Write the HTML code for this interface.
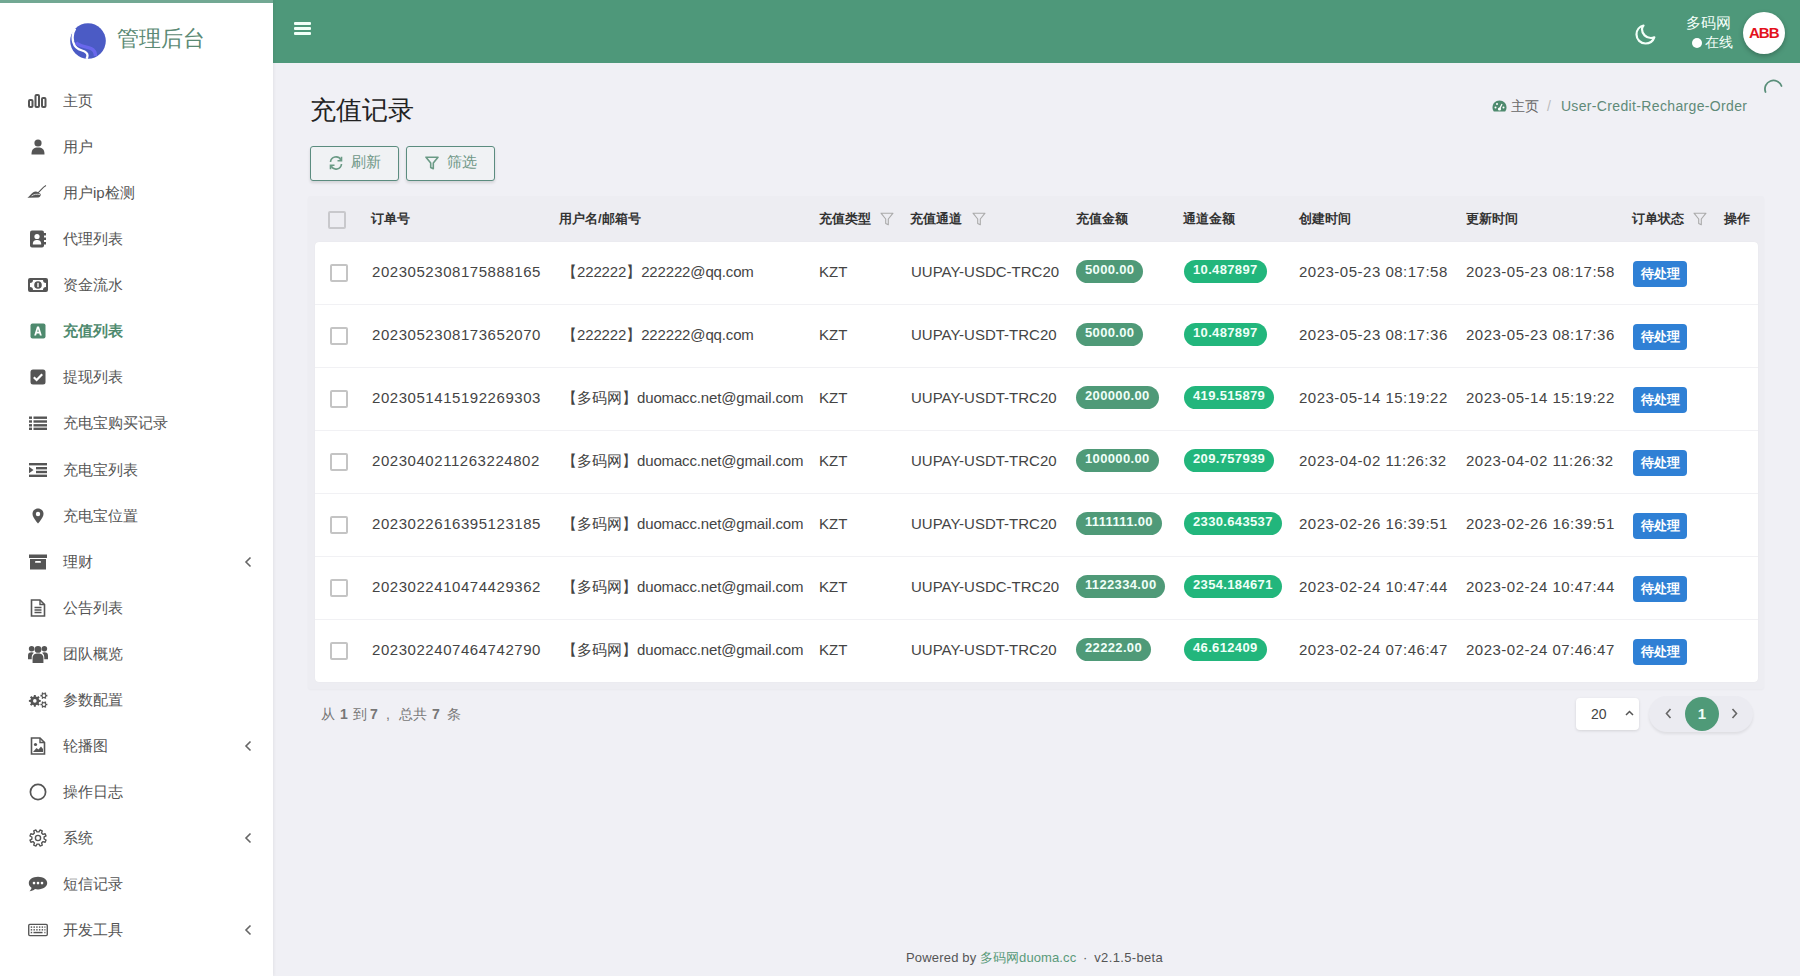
<!DOCTYPE html>
<html><head><meta charset="utf-8"><title>recharge</title>
<style>
*{box-sizing:border-box;margin:0;padding:0}
html,body{width:1800px;height:976px;overflow:hidden}
body{background:#f0f0f5;font-family:"Liberation Sans",sans-serif;color:#555;position:relative}
.abs{position:absolute}
i.c{font-style:normal;font-size:1.2em;line-height:0;letter-spacing:0.0833em;position:relative;top:0.1em;-webkit-text-stroke:0.6px currentColor}
.user i.c{letter-spacing:0.03em}
html.cjk i.c{font-size:1em;letter-spacing:0;top:0;-webkit-text-stroke:0;line-height:inherit}
html.cjk .mi.active .lbl i.c,html.cjk .th i.c,html.cjk .st i.c{-webkit-text-stroke:0}
.td.user{letter-spacing:-0.15px}
#side{position:absolute;left:0;top:0;width:273px;height:976px;background:#fff;box-shadow:1px 0 3px rgba(0,0,0,.06);z-index:2}
#side .strip{position:absolute;left:0;top:0;width:273px;height:3px;background:#72a893}
#logo{position:absolute;left:70px;top:23px;width:36px;height:36px}
#brand{position:absolute;left:117px;top:25px;font-size:22px;color:#5b8a74;line-height:28px;white-space:nowrap}
.mi{position:absolute;left:0;width:273px;height:46px}
.mi .ico{position:absolute;left:28px;top:0;width:20px;height:46px;display:flex;align-items:center;justify-content:center}
.mi .lbl{position:absolute;left:63px;top:14px;font-size:15px;line-height:18px;color:#555;white-space:nowrap}
.mi.active .lbl{color:#4e8a6e;font-weight:bold}
.mi .chev{position:absolute;left:244px;top:17px}
#hdr{position:absolute;left:273px;top:0;width:1527px;height:63px;background:#4e987a}
#ham{position:absolute;left:21px;top:22px;width:17px;height:13px}
#ham i{display:block;height:3px;background:#f2fff8;margin-bottom:2px;border-radius:1px}
#moon{position:absolute;left:1362px;top:24px}
#uname{position:absolute;left:1413px;top:14px;font-size:15px;line-height:18px;color:#f4fff9;white-space:nowrap}
#online{position:absolute;left:1419px;top:35px;font-size:13.5px;line-height:16px;color:#f4fff9;white-space:nowrap}
#online .dot{display:inline-block;width:10px;height:10px;border-radius:50%;background:#fff;vertical-align:-1px;margin-right:3px}
#avatar{position:absolute;left:1470px;top:12px;width:42px;height:42px;border-radius:50%;background:#fff;box-shadow:0 2px 5px rgba(0,0,0,.25)}
#avatar span{position:absolute;left:6px;top:13px;font-size:15px;line-height:16px;font-weight:bold;color:#e3121c;letter-spacing:-1px}
#title{position:absolute;left:310px;top:94px;font-size:26px;line-height:32px;color:#222;white-space:nowrap}
#crumb{position:absolute;left:1492px;top:97px;font-size:14px;line-height:18px;color:#5f8a78;white-space:nowrap}
#crumb .hm{color:#666}
#crumb .sep{color:#bbb;margin:0 10px 0 8px}
#crumb .tail{letter-spacing:0.35px}
#spin{position:absolute;left:1763px;top:78px}
.btn{position:absolute;top:146px;height:35px;border:1.5px solid #5b8c7f;border-radius:3px;background:#f0f2f4;box-shadow:0 2px 3px rgba(0,0,0,.12)}
.btn span{position:absolute;top:6px;font-size:14.5px;line-height:18px;color:#6f9787;white-space:nowrap}
#card{position:absolute;left:308px;top:196px;width:1456px;height:493px;background:#ededf2;border-radius:2px;box-shadow:0 1px 2px rgba(0,0,0,.03)}
.th{position:absolute;top:14px;font-size:13px;font-weight:bold;color:#333;line-height:18px;white-space:nowrap}
.filt{position:absolute;top:16px}
.cb{position:absolute;width:18px;height:18px;border:2px solid #c4c4c4;border-radius:2px;background:#fff}
#tbody{position:absolute;left:315px;top:242px;width:1443px;height:440px;background:#fff;border-radius:4px;box-shadow:0 0 1px rgba(0,0,0,.08)}
.tr{position:absolute;left:0;width:1443px;height:63px;border-bottom:1px solid #f1f1f4}
.tr.last{border-bottom:none}
.td{position:absolute;top:21px;font-size:15px;line-height:18px;color:#444;white-space:nowrap}
.td.num{letter-spacing:0.55px}
.td.dt{letter-spacing:0.5px}
.badge{position:absolute;top:18px;height:23px;border-radius:12px;padding:0 9px;font-size:13px;font-weight:bold;line-height:20px;color:#f0fff8;letter-spacing:0.35px;white-space:nowrap}
.b1{background:#4f9a78}
.b2{background:#22b67c}
.st{position:absolute;top:19px;width:54px;height:26px;border-radius:4px;background:#2f80d5;color:#fff;font-size:13px;font-weight:bold;line-height:26px;text-align:center;white-space:nowrap}
#info{position:absolute;left:320px;top:705px;font-size:14px;line-height:18px;color:#777;white-space:nowrap}
#info span,#info b{position:absolute;top:0}
#info b{color:#777}
#per{position:absolute;left:1576px;top:698px;width:63px;height:32px;background:#fff;border-radius:4px;box-shadow:0 1px 3px rgba(0,0,0,.12)}
#per span{position:absolute;left:15px;top:7px;font-size:14px;line-height:18px;color:#444}
#per svg{position:absolute;left:49px;top:12px}
#pager{position:absolute;left:1649px;top:696px;width:104px;height:36px;background:#ebebf1;border-radius:18px;box-shadow:0 2px 3px rgba(0,0,0,.08)}
#pager .cur{position:absolute;left:36px;top:1px;width:34px;height:34px;border-radius:50%;background:#4f9a78;color:#f0fff8;font-size:15px;font-weight:bold;line-height:34px;text-align:center}
#pager svg{position:absolute;top:12px}
#foot{position:absolute;left:906px;top:950px;font-size:13px;line-height:16px;color:#555;white-space:nowrap}
#foot .g{color:#5a9a7a}
#foot .pw{letter-spacing:0.18px}
#foot .g{letter-spacing:0.1px}
#foot .dotsep{display:inline-block;width:18px;text-align:center}
#foot .ver{letter-spacing:0.35px}
</style></head>
<body>
<div id="side">
  <div class="strip"></div>
  <svg id="logo" viewBox="0 0 36 36"><circle cx="18" cy="18" r="17.8" fill="#4b5bc5"/><path d="M6 19.5 C9 23.5 15 23 21 25.5 C24 27 25.5 29.5 25.5 33" stroke="#6e6af2" stroke-width="3.5" fill="none" opacity=".85"/><path d="M5.2 5.5 C2.5 9.5 2.3 15 3.2 19 C4.5 24 8 26.5 12 27.5 C15.5 28.5 17.5 30 17.5 32.5 C17.5 34 17 35 16.5 35.8" stroke="#fff" stroke-width="2.3" fill="none"/></svg>
  <div id="brand"><i class="c">管理后台</i></div>
<div class="mi" style="top:78px"><span class="ico"><svg width="20" height="14" viewBox="0 0 20 14"><g fill="none" stroke="#555" stroke-width="2"><rect x="1" y="6" width="3.5" height="7" rx="1"/><rect x="7.5" y="1" width="3.5" height="12" rx="1"/><rect x="14" y="4" width="3.5" height="9" rx="1"/></g></svg></span><span class="lbl"><i class="c">主页</i></span></div>
<div class="mi" style="top:124px"><span class="ico"><svg width="16" height="16" viewBox="0 0 16 16"><circle cx="8" cy="4" r="3.6" fill="#555"/><path d="M1.5 15.5 C1.5 10 4 8.5 8 8.5 C12 8.5 14.5 10 14.5 15.5 Z" fill="#555"/></svg></span><span class="lbl"><i class="c">用户</i></span></div>
<div class="mi" style="top:170px"><span class="ico"><svg width="26" height="17" viewBox="0 0 24 16" style="position:relative;top:-2px;left:-1px"><path d="M0.5 15.5 C3 13.8 5 10.5 7.5 8.8 C9.5 7.5 12 7.8 13.8 9.2 L16.8 11.2 C16 13.8 15 15 13.5 15.2 Z" fill="#555"/><path d="M13.2 9.6 C16.5 7 18.5 3 22.8 0.8" stroke="#555" stroke-width="1.3" fill="none"/><path d="M5.5 13.3 C8.5 11.2 11.5 11 16 11.6" stroke="#fff" stroke-width="0.9" fill="none"/></svg></span><span class="lbl"><i class="c">用户</i>ip<i class="c">检测</i></span></div>
<div class="mi" style="top:216px"><span class="ico"><svg width="18" height="18" viewBox="0 0 18 18"><rect x="1" y="0.5" width="14" height="17" rx="2" fill="#555"/><rect x="15" y="3" width="2" height="2.5" fill="#555"/><rect x="15" y="7.5" width="2" height="2.5" fill="#555"/><rect x="15" y="12" width="2" height="2.5" fill="#555"/><circle cx="8" cy="6.5" r="2.6" fill="#fff"/><path d="M3.8 14.5 C3.8 11 5.5 10 8 10 C10.5 10 12.2 11 12.2 14.5 Z" fill="#fff"/></svg></span><span class="lbl"><i class="c">代理列表</i></span></div>
<div class="mi" style="top:262px"><span class="ico"><svg width="20" height="14" viewBox="0 0 20 14"><rect x="1" y="1" width="18" height="12" rx="1" fill="none" stroke="#555" stroke-width="2"/><circle cx="10" cy="7" r="3.8" fill="#555"/><path d="M2 2h3a3 3 0 0 1-3 3z M18 2h-3a3 3 0 0 0 3 3z M2 12h3a3 3 0 0 0-3-3z M18 12h-3a3 3 0 0 1 3-3z" fill="#555"/><rect x="9.3" y="4.8" width="1.4" height="4.4" fill="#fff"/></svg></span><span class="lbl"><i class="c">资金流水</i></span></div>
<div class="mi active" style="top:308px"><span class="ico"><svg width="16" height="16" viewBox="0 0 16 16"><rect x="0.5" y="0.5" width="15" height="15" rx="2" fill="#4e8a6e"/><path d="M4.2 12.5 L7 3.5 H9 L11.8 12.5 H9.9 L9.3 10.5 H6.7 L6.1 12.5 Z M7.2 8.8 H8.8 L8 6 Z" fill="#fff"/></svg></span><span class="lbl"><i class="c">充值列表</i></span></div>
<div class="mi" style="top:354px"><span class="ico"><svg width="16" height="16" viewBox="0 0 16 16"><rect x="0.5" y="0.5" width="15" height="15" rx="2.5" fill="#555"/><path d="M3.8 8.2 L6.6 11 L12.2 5.2" stroke="#fff" stroke-width="2.2" fill="none"/></svg></span><span class="lbl"><i class="c">提现列表</i></span></div>
<div class="mi" style="top:400px"><span class="ico"><svg width="18" height="14" viewBox="0 0 18 14"><g fill="#555"><rect x="0" y="0.5" width="3" height="2.4"/><rect x="4.5" y="0.5" width="13.5" height="2.4"/><rect x="0" y="4.3" width="3" height="2.4"/><rect x="4.5" y="4.3" width="13.5" height="2.4"/><rect x="0" y="8.1" width="3" height="2.4"/><rect x="4.5" y="8.1" width="13.5" height="2.4"/><rect x="0" y="11.6" width="3" height="2.4"/><rect x="4.5" y="11.6" width="13.5" height="2.4"/></g></svg></span><span class="lbl"><i class="c">充电宝购买记录</i></span></div>
<div class="mi" style="top:447px"><span class="ico"><svg width="18" height="14" viewBox="0 0 18 14"><g fill="#555"><rect x="0" y="0" width="18" height="2.4"/><rect x="7" y="4" width="11" height="2.4"/><rect x="7" y="7.8" width="11" height="2.4"/><rect x="0" y="11.6" width="18" height="2.4"/><path d="M0 3.8 L4.5 7 L0 10.2 Z"/></g></svg></span><span class="lbl"><i class="c">充电宝列表</i></span></div>
<div class="mi" style="top:493px"><span class="ico"><svg width="12" height="16" viewBox="0 0 12 16"><path d="M6 0.5 C9.2 0.5 11.5 2.8 11.5 6 C11.5 9.5 6 15.5 6 15.5 C6 15.5 0.5 9.5 0.5 6 C0.5 2.8 2.8 0.5 6 0.5 Z" fill="#555"/><circle cx="6" cy="6" r="2.2" fill="#fff"/></svg></span><span class="lbl"><i class="c">充电宝位置</i></span></div>
<div class="mi" style="top:539px"><span class="ico"><svg width="18" height="16" viewBox="0 0 18 16"><rect x="0" y="0.5" width="18" height="3.5" fill="#555"/><rect x="1" y="5" width="16" height="10.5" fill="#555"/><rect x="6" y="7" width="6" height="1.8" rx="0.9" fill="#fff"/></svg></span><span class="lbl"><i class="c">理财</i></span><svg class="chev" width="8" height="12" viewBox="0 0 8 12"><path d="M6.5 1.5 L2 6 L6.5 10.5" fill="none" stroke="#666" stroke-width="1.6"/></svg></div>
<div class="mi" style="top:585px"><span class="ico"><svg width="16" height="18" viewBox="0 0 16 18"><path d="M1.5 1 H10 L14.5 5.5 V17 H1.5 Z" fill="none" stroke="#555" stroke-width="1.6"/><path d="M10 1 V5.5 H14.5" fill="none" stroke="#555" stroke-width="1.4"/><g stroke="#555" stroke-width="1.3"><path d="M4.5 8.5 H11.5 M4.5 11 H11.5 M4.5 13.5 H11.5"/></g></svg></span><span class="lbl"><i class="c">公告列表</i></span></div>
<div class="mi" style="top:631px"><span class="ico"><svg width="21" height="20" viewBox="0 0 21 20"><g fill="#555"><circle cx="10.5" cy="5.2" r="3.6"/><circle cx="3.8" cy="4.6" r="2.9"/><circle cx="17.2" cy="4.6" r="2.9"/><path d="M4.8 19.5 V14.5 C4.8 11 7 9.6 10.5 9.6 C14 9.6 16.2 11 16.2 14.5 V19.5 Z"/><path d="M0 15.5 V11.8 C0 9.2 1.3 8.2 3.8 8.2 C4.8 8.2 5.6 8.4 6.2 8.8 C4.6 10 3.9 11.6 3.9 13.6 V15.5 Z"/><path d="M21 15.5 V11.8 C21 9.2 19.7 8.2 17.2 8.2 C16.2 8.2 15.4 8.4 14.8 8.8 C16.4 10 17.1 11.6 17.1 13.6 V15.5 Z"/></g></svg></span><span class="lbl"><i class="c">团队概览</i></span></div>
<div class="mi" style="top:677px"><span class="ico"><svg width="22" height="18" viewBox="0 0 22 18"><path d="M12.26 8.84 L14.02 8.96 L14.02 11.04 L12.26 11.16 L11.69 12.54 L12.84 13.88 L11.38 15.34 L10.04 14.19 L8.66 14.76 L8.54 16.52 L6.46 16.52 L6.34 14.76 L4.96 14.19 L3.62 15.34 L2.16 13.88 L3.31 12.54 L2.74 11.16 L0.98 11.04 L0.98 8.96 L2.74 8.84 L3.31 7.46 L2.16 6.12 L3.62 4.66 L4.96 5.81 L6.34 5.24 L6.46 3.48 L8.54 3.48 L8.66 5.24 L10.04 5.81 L11.38 4.66 L12.84 6.12 L11.69 7.46 Z" fill="#555"/><circle cx="7.5" cy="10" r="2" fill="#fff"/><path d="M20.04 3.29 L21.29 3.29 L21.29 5.11 L20.04 5.11 L19.56 5.94 L20.19 7.03 L18.60 7.94 L17.98 6.86 L17.02 6.86 L16.40 7.94 L14.81 7.03 L15.44 5.94 L14.96 5.11 L13.71 5.11 L13.71 3.29 L14.96 3.29 L15.44 2.46 L14.81 1.37 L16.40 0.46 L17.02 1.54 L17.98 1.54 L18.60 0.46 L20.19 1.37 L19.56 2.46 Z" fill="#555"/><circle cx="17.5" cy="4.2" r="1.5" fill="#fff"/><path d="M20.04 13.09 L21.29 13.09 L21.29 14.91 L20.04 14.91 L19.56 15.74 L20.19 16.83 L18.60 17.74 L17.98 16.66 L17.02 16.66 L16.40 17.74 L14.81 16.83 L15.44 15.74 L14.96 14.91 L13.71 14.91 L13.71 13.09 L14.96 13.09 L15.44 12.26 L14.81 11.17 L16.40 10.26 L17.02 11.34 L17.98 11.34 L18.60 10.26 L20.19 11.17 L19.56 12.26 Z" fill="#555"/><circle cx="17.5" cy="14" r="1.5" fill="#fff"/></svg></span><span class="lbl"><i class="c">参数配置</i></span></div>
<div class="mi" style="top:723px"><span class="ico"><svg width="16" height="18" viewBox="0 0 16 18"><path d="M1.5 1 H10 L14.5 5.5 V17 H1.5 Z" fill="none" stroke="#555" stroke-width="1.6"/><path d="M10 1 V5.5 H14.5" fill="none" stroke="#555" stroke-width="1.4"/><circle cx="5.5" cy="7.5" r="1.6" fill="#555"/><path d="M3 15 L6.5 11 L8.5 12.5 L11 9.5 L13 12 V15 Z" fill="#555"/></svg></span><span class="lbl"><i class="c">轮播图</i></span><svg class="chev" width="8" height="12" viewBox="0 0 8 12"><path d="M6.5 1.5 L2 6 L6.5 10.5" fill="none" stroke="#666" stroke-width="1.6"/></svg></div>
<div class="mi" style="top:769px"><span class="ico"><svg width="18" height="18" viewBox="0 0 18 18"><circle cx="9" cy="9" r="7.6" fill="none" stroke="#555" stroke-width="1.7"/></svg></span><span class="lbl"><i class="c">操作日志</i></span></div>
<div class="mi" style="top:815px"><span class="ico"><svg width="18" height="18" viewBox="0 0 18 18"><path d="M15.12 10.00 L17.05 11.00 L16.14 13.24 L14.05 12.59 L12.62 14.03 L13.28 16.11 L11.05 17.04 L10.03 15.11 L8.00 15.12 L7.00 17.05 L4.76 16.14 L5.41 14.05 L3.97 12.62 L1.89 13.28 L0.96 11.05 L2.89 10.03 L2.88 8.00 L0.95 7.00 L1.86 4.76 L3.95 5.41 L5.38 3.97 L4.72 1.89 L6.95 0.96 L7.97 2.89 L10.00 2.88 L11.00 0.95 L13.24 1.86 L12.59 3.95 L14.03 5.38 L16.11 4.72 L17.04 6.95 L15.11 7.97 Z" fill="none" stroke="#555" stroke-width="1.4" stroke-linejoin="round"/><circle cx="9" cy="9" r="2.6" fill="none" stroke="#555" stroke-width="1.4"/></svg></span><span class="lbl"><i class="c">系统</i></span><svg class="chev" width="8" height="12" viewBox="0 0 8 12"><path d="M6.5 1.5 L2 6 L6.5 10.5" fill="none" stroke="#666" stroke-width="1.6"/></svg></div>
<div class="mi" style="top:861px"><span class="ico"><svg width="20" height="16" viewBox="0 0 20 16"><path d="M10 0.8 C15.3 0.8 19.2 3.6 19.2 7.1 C19.2 10.6 15.3 13.4 10 13.4 C8.9 13.4 7.9 13.3 7 13.1 C5.6 14.5 3.5 15.2 1.5 15.3 C2.6 14.3 3.4 13.1 3.5 11.8 C1.8 10.7 0.8 9 0.8 7.1 C0.8 3.6 4.7 0.8 10 0.8 Z" fill="#555"/><circle cx="6" cy="7.1" r="1.3" fill="#fff"/><circle cx="10" cy="7.1" r="1.3" fill="#fff"/><circle cx="14" cy="7.1" r="1.3" fill="#fff"/></svg></span><span class="lbl"><i class="c">短信记录</i></span></div>
<div class="mi" style="top:907px"><span class="ico"><svg width="22" height="14" viewBox="0 0 22 14"><rect x="0.8" y="0.8" width="20.4" height="12.4" rx="1.2" fill="none" stroke="#555" stroke-width="1.5"/><g fill="#555"><rect x="3" y="3" width="1.6" height="1.6"/><rect x="6" y="3" width="1.6" height="1.6"/><rect x="9" y="3" width="1.6" height="1.6"/><rect x="12" y="3" width="1.6" height="1.6"/><rect x="15" y="3" width="1.6" height="1.6"/><rect x="18" y="3" width="1.2" height="1.6"/><rect x="3" y="6" width="1.6" height="1.6"/><rect x="6" y="6" width="1.6" height="1.6"/><rect x="9" y="6" width="1.6" height="1.6"/><rect x="12" y="6" width="1.6" height="1.6"/><rect x="15" y="6" width="1.6" height="1.6"/><rect x="18" y="6" width="1.2" height="1.6"/><rect x="3" y="9" width="1.6" height="1.6"/><rect x="6" y="9" width="10" height="1.6"/><rect x="18" y="9" width="1.2" height="1.6"/></g></svg></span><span class="lbl"><i class="c">开发工具</i></span><svg class="chev" width="8" height="12" viewBox="0 0 8 12"><path d="M6.5 1.5 L2 6 L6.5 10.5" fill="none" stroke="#666" stroke-width="1.6"/></svg></div>
</div>

<div id="hdr">
  <div id="ham"><i></i><i></i><i></i></div>
  <svg id="moon" width="21" height="21" viewBox="0 0 21 21"><path d="M8.5 1.5 C4.5 2.5 1.5 6 1.5 10.5 C1.5 15.5 5.5 19.5 10.5 19.5 C14.5 19.5 18 17 19.3 13.3 C18.2 13.8 17 14 15.8 14 C11 14 7 10 7 5.2 C7 3.9 7.5 2.6 8.5 1.5 Z" fill="none" stroke="#f4fff9" stroke-width="2.2" stroke-linejoin="round"/></svg>
  <div id="uname"><i class="c">多码网</i></div>
  <div id="online"><b class="dot"></b><i class="c">在线</i></div>
  <div id="avatar"><span>ABB</span></div>
</div>

<div id="title"><i class="c">充值记录</i></div>
<div id="crumb"><svg width="15" height="12" viewBox="0 0 15 12" style="vertical-align:-1px;margin-right:4px"><path d="M7.5 0.5 C11.6 0.5 14.5 3.6 14.5 7.5 C14.5 9 14 10.4 13.2 11.5 H1.8 C1 10.4 0.5 9 0.5 7.5 C0.5 3.6 3.4 0.5 7.5 0.5 Z" fill="#4e8a6e"/><circle cx="7.5" cy="9" r="1.6" fill="#fff"/><path d="M7.5 9 L10 4" stroke="#fff" stroke-width="1.3"/><circle cx="3.5" cy="7.5" r="1" fill="#fff"/><circle cx="5" cy="4" r="1" fill="#fff"/><circle cx="11.5" cy="7.5" r="1" fill="#fff"/></svg><span class="hm"><i class="c">主页</i></span><span class="sep">/</span><span class="tail">User-Credit-Recharge-Order</span></div>
<svg id="spin" width="20" height="16" viewBox="0 0 20 16"><path d="M2.5 14 A8.5 8.5 0 0 1 18.5 8" fill="none" stroke="#5a8f7a" stroke-width="1.8" stroke-linecap="round"/></svg>

<div class="btn" style="left:310px;width:89px"><svg style="position:absolute;left:17px;top:9px" width="16" height="14" viewBox="0 0 16 14"><path d="M2.5 6 A5.5 5.5 0 0 1 12.8 3.8" fill="none" stroke="#6a9a85" stroke-width="1.6"/><path d="M13.5 0.8 V4.8 H9.5" fill="none" stroke="#6a9a85" stroke-width="1.6"/><path d="M13.5 8 A5.5 5.5 0 0 1 3.2 10.2" fill="none" stroke="#6a9a85" stroke-width="1.6"/><path d="M2.5 13.2 V9.2 H6.5" fill="none" stroke="#6a9a85" stroke-width="1.6"/></svg><span style="left:40px"><i class="c">刷新</i></span></div>
<div class="btn" style="left:406px;width:89px"><svg style="position:absolute;left:18px;top:9px" width="14" height="14" viewBox="0 0 14 14"><path d="M1 1.2 H13 L8.3 7 V12.8 L5.7 11.5 V7 Z" fill="none" stroke="#6a9a85" stroke-width="1.6" stroke-linejoin="round"/></svg><span style="left:40px"><i class="c">筛选</i></span></div>

<div id="card">
  <span class="cb" style="left:20px;top:15px;background:transparent;border-color:#c8c8cc"></span>
  <span class="th" style="left:63px"><i class="c">订单号</i></span>
  <span class="th" style="left:251px"><i class="c">用户名</i>/<i class="c">邮箱号</i></span>
  <span class="th" style="left:511px"><i class="c">充值类型</i></span><svg class="filt" style="left:572px" width="14" height="14" viewBox="0 0 14 14"><path d="M1 1.2 H13 L8.3 7 V12.8 L5.7 11.5 V7 Z" fill="none" stroke="#aaa" stroke-width="1.1" stroke-linejoin="round"/></svg><svg class="filt" style="left:664px" width="14" height="14" viewBox="0 0 14 14"><path d="M1 1.2 H13 L8.3 7 V12.8 L5.7 11.5 V7 Z" fill="none" stroke="#aaa" stroke-width="1.1" stroke-linejoin="round"/></svg><svg class="filt" style="left:1385px" width="14" height="14" viewBox="0 0 14 14"><path d="M1 1.2 H13 L8.3 7 V12.8 L5.7 11.5 V7 Z" fill="none" stroke="#aaa" stroke-width="1.1" stroke-linejoin="round"/></svg>
  <span class="th" style="left:602px"><i class="c">充值通道</i></span>
  <span class="th" style="left:768px"><i class="c">充值金额</i></span>
  <span class="th" style="left:875px"><i class="c">通道金额</i></span>
  <span class="th" style="left:991px"><i class="c">创建时间</i></span>
  <span class="th" style="left:1158px"><i class="c">更新时间</i></span>
  <span class="th" style="left:1324px"><i class="c">订单状态</i></span>
  <span class="th" style="left:1416px"><i class="c">操作</i></span>
</div>
<div id="tbody">
<div class="tr" style="top:0px"><span class="cb" style="left:15px;top:22px"></span><span class="td num" style="left:57px">2023052308175888165</span><span class="td user" style="left:247px"><i class="c">【</i>222222<i class="c">】</i>222222@qq.com</span><span class="td kzt" style="left:504px">KZT</span><span class="td ch" style="left:596px">UUPAY-USDC-TRC20</span><span class="badge b1" style="left:761px">5000.00</span><span class="badge b2" style="left:869px">10.487897</span><span class="td dt" style="left:984px">2023-05-23 08:17:58</span><span class="td dt" style="left:1151px">2023-05-23 08:17:58</span><span class="st" style="left:1318px"><i class="c">待处理</i></span></div>
<div class="tr" style="top:63px"><span class="cb" style="left:15px;top:22px"></span><span class="td num" style="left:57px">2023052308173652070</span><span class="td user" style="left:247px"><i class="c">【</i>222222<i class="c">】</i>222222@qq.com</span><span class="td kzt" style="left:504px">KZT</span><span class="td ch" style="left:596px">UUPAY-USDT-TRC20</span><span class="badge b1" style="left:761px">5000.00</span><span class="badge b2" style="left:869px">10.487897</span><span class="td dt" style="left:984px">2023-05-23 08:17:36</span><span class="td dt" style="left:1151px">2023-05-23 08:17:36</span><span class="st" style="left:1318px"><i class="c">待处理</i></span></div>
<div class="tr" style="top:126px"><span class="cb" style="left:15px;top:22px"></span><span class="td num" style="left:57px">2023051415192269303</span><span class="td user" style="left:247px"><i class="c">【多码网】</i>duomacc.net@gmail.com</span><span class="td kzt" style="left:504px">KZT</span><span class="td ch" style="left:596px">UUPAY-USDT-TRC20</span><span class="badge b1" style="left:761px">200000.00</span><span class="badge b2" style="left:869px">419.515879</span><span class="td dt" style="left:984px">2023-05-14 15:19:22</span><span class="td dt" style="left:1151px">2023-05-14 15:19:22</span><span class="st" style="left:1318px"><i class="c">待处理</i></span></div>
<div class="tr" style="top:189px"><span class="cb" style="left:15px;top:22px"></span><span class="td num" style="left:57px">2023040211263224802</span><span class="td user" style="left:247px"><i class="c">【多码网】</i>duomacc.net@gmail.com</span><span class="td kzt" style="left:504px">KZT</span><span class="td ch" style="left:596px">UUPAY-USDT-TRC20</span><span class="badge b1" style="left:761px">100000.00</span><span class="badge b2" style="left:869px">209.757939</span><span class="td dt" style="left:984px">2023-04-02 11:26:32</span><span class="td dt" style="left:1151px">2023-04-02 11:26:32</span><span class="st" style="left:1318px"><i class="c">待处理</i></span></div>
<div class="tr" style="top:252px"><span class="cb" style="left:15px;top:22px"></span><span class="td num" style="left:57px">2023022616395123185</span><span class="td user" style="left:247px"><i class="c">【多码网】</i>duomacc.net@gmail.com</span><span class="td kzt" style="left:504px">KZT</span><span class="td ch" style="left:596px">UUPAY-USDT-TRC20</span><span class="badge b1" style="left:761px">1111111.00</span><span class="badge b2" style="left:869px">2330.643537</span><span class="td dt" style="left:984px">2023-02-26 16:39:51</span><span class="td dt" style="left:1151px">2023-02-26 16:39:51</span><span class="st" style="left:1318px"><i class="c">待处理</i></span></div>
<div class="tr" style="top:315px"><span class="cb" style="left:15px;top:22px"></span><span class="td num" style="left:57px">2023022410474429362</span><span class="td user" style="left:247px"><i class="c">【多码网】</i>duomacc.net@gmail.com</span><span class="td kzt" style="left:504px">KZT</span><span class="td ch" style="left:596px">UUPAY-USDC-TRC20</span><span class="badge b1" style="left:761px">1122334.00</span><span class="badge b2" style="left:869px">2354.184671</span><span class="td dt" style="left:984px">2023-02-24 10:47:44</span><span class="td dt" style="left:1151px">2023-02-24 10:47:44</span><span class="st" style="left:1318px"><i class="c">待处理</i></span></div>
<div class="tr last" style="top:378px"><span class="cb" style="left:15px;top:22px"></span><span class="td num" style="left:57px">2023022407464742790</span><span class="td user" style="left:247px"><i class="c">【多码网】</i>duomacc.net@gmail.com</span><span class="td kzt" style="left:504px">KZT</span><span class="td ch" style="left:596px">UUPAY-USDT-TRC20</span><span class="badge b1" style="left:761px">22222.00</span><span class="badge b2" style="left:869px">46.612409</span><span class="td dt" style="left:984px">2023-02-24 07:46:47</span><span class="td dt" style="left:1151px">2023-02-24 07:46:47</span><span class="st" style="left:1318px"><i class="c">待处理</i></span></div>
</div>

<div id="info"><span style="left:1px"><i class="c">从</i></span><b style="left:20px">1</b><span style="left:33px"><i class="c">到</i></span><b style="left:50px">7</b><span style="left:66px">,</span><span style="left:79px"><i class="c">总共</i></span><b style="left:112px">7</b><span style="left:127px"><i class="c">条</i></span></div>
<div id="per"><span>20</span><svg width="9" height="6" viewBox="0 0 9 6"><path d="M1 5 L4.5 1.5 L8 5" fill="none" stroke="#555" stroke-width="1.5"/></svg></div>
<div id="pager"><svg style="left:16px" width="7" height="11" viewBox="0 0 7 11"><path d="M5.5 1 L1.5 5.5 L5.5 10" fill="none" stroke="#666" stroke-width="1.6"/></svg><div class="cur">1</div><svg style="left:82px" width="7" height="11" viewBox="0 0 7 11"><path d="M1.5 1 L5.5 5.5 L1.5 10" fill="none" stroke="#666" stroke-width="1.6"/></svg></div>

<div id="foot"><span class="pw">Powered by</span> <span class="g"><i class="c">多码网</i>duoma.cc</span><span class="dotsep">·</span><span class="ver">v2.1.5-beta</span></div>
<script>(function(){try{var s=document.createElement("span");s.style.cssText="position:absolute;left:0;top:0;visibility:hidden;font-size:100px;font-family:'Liberation Sans',sans-serif;white-space:nowrap";s.textContent="\u4e2d\u6587";document.body.appendChild(s);var w=s.getBoundingClientRect().width;document.body.removeChild(s);if(w>180)document.documentElement.className+=" cjk";}catch(e){}})();</script>
</body></html>
